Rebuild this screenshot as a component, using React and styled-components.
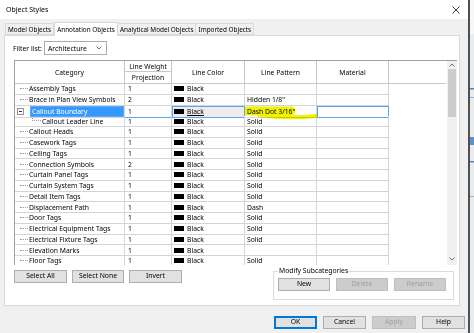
import React from 'react';
import styled, { createGlobalStyle } from 'styled-components';

const GlobalStyle = createGlobalStyle`
  html, body {
    margin: 0;
    padding: 0;
    background: #f0f0f0;
  }
  body {
    font-family: "Noto Sans", "DejaVu Sans", sans-serif;
    font-size: 6.8px;
    color: #000;
  }
  * {
    box-sizing: border-box;
  }
`;

const COLS = '110px 47px 73px 72px 72px 1fr';

const Screen = styled.div`
  display: flex;
  width: 474px;
  height: 333px;
  overflow: hidden;
`;

const Dialog = styled.div`
  display: flex;
  flex-direction: column;
  width: 469px;
  background: #f0f0f0;
`;

const TitleBar = styled.div`
  display: flex;
  align-items: center;
  justify-content: space-between;
  height: 19px;
  padding: 0 8px 0 6px;
  background: #fff;
  font-size: 7px;
`;

const Body = styled.div`
  display: flex;
  flex-direction: column;
  padding: 2px 8px 0 4px;
`;

const TabBar = styled.div`
  display: flex;
  align-items: flex-end;
  height: 14px;
  padding-left: 1px;
`;

const Tab = styled.div`
  display: flex;
  align-items: center;
  height: ${({ active }) => (active ? '14px' : '12px')};
  padding: 0 2px;
  margin-bottom: ${({ active }) => (active ? '-1px' : '0')};
  background: ${({ active }) => (active ? '#fff' : '#f0f0f0')};
  border: 1px solid #d9d9d9;
  border-bottom: ${({ active }) => (active ? 'none' : '1px solid #d9d9d9')};
  border-left: ${({ first, active }) => (first || active ? '1px solid #d9d9d9' : 'none')};
  position: relative;
  z-index: ${({ active }) => (active ? 1 : 0)};
  font-size: 6.4px;
  white-space: nowrap;
`;

const Panel = styled.div`
  display: flex;
  flex-direction: column;
  height: 271px;
  padding: 5px 2px 0 8px;
  background: #fff;
  border: 1px solid #d9d9d9;
`;

const FilterRow = styled.div`
  display: flex;
  align-items: center;
  gap: 2px;
  height: 14px;
`;

const Select = styled.div`
  display: flex;
  align-items: center;
  justify-content: space-between;
  width: 63px;
  height: 14px;
  padding: 0 4px 0 3px;
  border: 1px solid #adadad;
  background: #fff;
`;

const GridFrame = styled.div`
  display: flex;
  height: 205px;
  margin: 5px 0 0 1px;
  border-top: 1px solid #a0a0a0;
  border-left: 1px solid #a0a0a0;
  overflow: hidden;
`;

const GridBody = styled.div`
  flex: 1;
  overflow: hidden;
`;

const Header = styled.div`
  display: grid;
  grid-template-columns: ${COLS};
  grid-template-rows: 11px 12px;
  background: #fff;
`;

const HeadCell = styled.div`
  display: flex;
  align-items: center;
  justify-content: center;
  grid-column: ${({ col }) => col};
  grid-row: ${({ row }) => row};
  border-right: 1px solid ${({ last }) => (last ? 'transparent' : '#c8c8c8')};
  border-bottom: 1px solid #c8c8c8;
  white-space: nowrap;
`;

const Row = styled.div`
  display: grid;
  grid-template-columns: ${COLS};
  height: 10.75px;
`;

const Cell = styled.div`
  display: flex;
  align-items: center;
  position: relative;
  padding-left: ${({ pad }) => pad || 0}px;
  border-right: 1px solid #d4d4d4;
  border-bottom: 1px solid ${({ focus }) => (focus ? '#5da4e8' : '#d4d4d4')};
  white-space: nowrap;
`;

const FocusCell = styled(Cell)`
  background: ${({ shade }) => (shade ? '#ececec' : '#fff')};
  outline: 1px solid #5da4e8;
  outline-offset: -1px;
`;

const Filler = styled.div``;

const TreeLine = styled.span`
  display: inline-block;
  width: 8px;
  margin: 0 1px 0 5px;
  border-top: 1px dotted #9a9a9a;
`;

const TreeElbow = styled.span`
  display: inline-block;
  align-self: flex-start;
  width: 9px;
  height: 5px;
  margin: 0 1px 0 17px;
  border-left: 1px dotted #9a9a9a;
  border-bottom: 1px dotted #9a9a9a;
`;

const ExpandBox = styled.span`
  display: inline-flex;
  align-items: center;
  justify-content: center;
  width: 7px;
  height: 7px;
  margin: 0 6px 0 2px;
  border: 1px solid #919191;
  &::after {
    content: '';
    width: 3px;
    border-top: 1px solid #333;
  }
`;

const Highlight = styled.span`
  display: flex;
  align-items: center;
  align-self: stretch;
  flex: 1;
  padding-left: 1px;
  background: #3399ff;
  color: #fff;
  border: 1px solid #5aaaf5;
`;

const Swatch = styled.span`
  display: inline-block;
  width: 10px;
  height: 5px;
  margin: 0 3px 0 2px;
  background: #000;
`;

const Underlined = styled.span`
  text-decoration: underline;
`;

const Marker = styled.svg`
  position: absolute;
  left: 0;
  top: -6px;
  mix-blend-mode: multiply;
  pointer-events: none;
  z-index: 2;
`;

const Scrollbar = styled.div`
  display: flex;
  flex-direction: column;
  align-items: center;
  width: 10px;
  background: #f0f0f0;
`;

const ScrollArrow = styled.div`
  display: flex;
  align-items: center;
  justify-content: center;
  height: ${({ h }) => h}px;
`;

const Thumb = styled.div`
  width: 8px;
  height: 48px;
  background: #cdcdcd;
`;

const Track = styled.div`
  flex: 1;
`;

const BottomRow = styled.div`
  display: flex;
  align-items: flex-start;
  margin-top: 4px;
`;

const ButtonGroup = styled.div`
  display: flex;
  gap: ${({ gap }) => gap || 5}px;
  margin: ${({ m }) => m || 0};
`;

const Button = styled.button`
  width: ${({ w }) => w || 53}px;
  height: 13px;
  padding: 0;
  font-family: inherit;
  font-size: 6.8px;
  color: ${({ disabled }) => (disabled ? '#a0a0a0' : '#000')};
  background: ${({ disabled }) => (disabled ? '#cccccc' : '#e1e1e1')};
  border: 1px solid ${({ primary, disabled }) =>
    primary ? '#0078d7' : disabled ? '#bfbfbf' : '#adadad'};
  box-shadow: ${({ primary }) => (primary ? 'inset 0 0 0 1px #0078d7' : 'none')};
  line-height: 1;
`;

const GroupBox = styled.fieldset`
  width: 181px;
  height: 33px;
  margin: -2px 3px 0 auto;
  padding: 0 0 0 4px;
  border: 1px solid #dcdcdc;
`;

const GroupLegend = styled.legend`
  padding: 0 1px;
  margin-left: 0;
  font-size: 6.8px;
  line-height: 8px;
`;

const Footer = styled.div`
  display: flex;
  justify-content: flex-end;
  gap: 6px;
  padding: 10px 3px 0 0;
`;

const BackWindow = styled.div`
  flex: 1;
  border-left: 2px solid #505050;
  background: #e9ecef;
`;

const rows = [
  { name: 'Assembly Tags', w: '1', p: '' },
  { name: 'Brace in Plan View Symbols', w: '2', p: 'Hidden 1/8"' },
  { name: 'Callout Boundary', w: '1', p: 'Dash Dot 3/16"', selected: true },
  { name: 'Callout Leader Line', w: '1', p: 'Solid', child: true },
  { name: 'Callout Heads', w: '1', p: 'Solid' },
  { name: 'Casework Tags', w: '1', p: 'Solid' },
  { name: 'Ceiling Tags', w: '1', p: 'Solid' },
  { name: 'Connection Symbols', w: '2', p: 'Solid' },
  { name: 'Curtain Panel Tags', w: '1', p: 'Solid' },
  { name: 'Curtain System Tags', w: '1', p: 'Solid' },
  { name: 'Detail Item Tags', w: '1', p: 'Solid' },
  { name: 'Displacement Path', w: '1', p: 'Dash' },
  { name: 'Door Tags', w: '1', p: 'Solid' },
  { name: 'Electrical Equipment Tags', w: '1', p: 'Solid' },
  { name: 'Electrical Fixture Tags', w: '1', p: 'Solid' },
  { name: 'Elevation Marks', w: '1', p: '' },
  { name: 'Floor Tags', w: '1', p: 'Solid' },
];

const CloseIcon = () => (
  <svg width="8" height="8" viewBox="0 0 8 8">
    <path d="M0.5 0.5 L7.5 7.5 M7.5 0.5 L0.5 7.5" stroke="#222" strokeWidth="0.9" />
  </svg>
);

const Chevron = ({ up }) => (
  <svg width="6" height="4" viewBox="0 0 6 4">
    <path d={up ? 'M0.5 3.5 L3 1 L5.5 3.5' : 'M0.5 0.5 L3 3 L5.5 0.5'} stroke="#606060" strokeWidth="0.9" fill="none" />
  </svg>
);

// strip of the window lying behind the dialog
const BackMarks = () => (
  <svg width="4" height="333" viewBox="0 0 4 333">
    <rect x="0" y="0" width="4" height="34" fill="#f7f7f7" />
    <rect x="0" y="88" width="4" height="1.5" fill="#4d86c4" />
    <rect x="0" y="97" width="4" height="1" fill="#8fb3da" />
    <rect x="0" y="137" width="4" height="8" fill="#5b92cc" />
    <rect x="0" y="161" width="4" height="1.5" fill="#4d86c4" />
    <rect x="0" y="196" width="4" height="1" fill="#8fb3da" />
  </svg>
);

const CategoryCell = ({ row }) => {
  if (row.selected) {
    return (
      <Cell>
        <ExpandBox />
        <Highlight>{row.name}</Highlight>
      </Cell>
    );
  }
  return (
    <Cell>
      {row.child ? <TreeElbow /> : <TreeLine />}
      {row.name}
    </Cell>
  );
};

const GridRow = ({ row }) => (
  <Row>
    <CategoryCell row={row} />
    {row.selected ? (
      <>
        <Cell pad={3} focus>{row.w}</Cell>
        <FocusCell shade>
          <Swatch />
          <Underlined>Black</Underlined>
        </FocusCell>
        <Cell pad={2}>
          <Marker width="74" height="22" viewBox="0 0 74 22">
            <path d="M2 11 L46 11" stroke="#f2f200" strokeWidth="9" strokeLinecap="round" />
            <path d="M14 15 Q44 19 70 16" stroke="#f2f200" strokeWidth="4" strokeLinecap="round" fill="none" />
          </Marker>
          {row.p}
        </Cell>
        <FocusCell />
      </>
    ) : (
      <>
        <Cell pad={3}>{row.w}</Cell>
        <Cell>
          <Swatch />
          Black
        </Cell>
        <Cell pad={2}>{row.p}</Cell>
        <Cell />
      </>
    )}
    <Filler />
  </Row>
);

const App = () => (
  <>
    <GlobalStyle />
    <Screen>
      <Dialog>
        <TitleBar>
          <span>Object Styles</span>
          <CloseIcon />
        </TitleBar>
        <Body>
          <TabBar>
            <Tab first>Model Objects</Tab>
            <Tab active>Annotation Objects</Tab>
            <Tab>Analytical Model Objects</Tab>
            <Tab>Imported Objects</Tab>
          </TabBar>
          <Panel>
            <FilterRow>
              <span>Filter list:</span>
              <Select>
                <span>Architecture</span>
                <Chevron />
              </Select>
            </FilterRow>
            <GridFrame>
              <GridBody>
                <Header>
                  <HeadCell col="1" row="1 / 3">Category</HeadCell>
                  <HeadCell col="2" row="1">Line Weight</HeadCell>
                  <HeadCell col="2" row="2">Projection</HeadCell>
                  <HeadCell col="3" row="1 / 3">Line Color</HeadCell>
                  <HeadCell col="4" row="1 / 3">Line Pattern</HeadCell>
                  <HeadCell col="5" row="1 / 3">Material</HeadCell>
                  <HeadCell col="6" row="1 / 3" last />
                </Header>
                {rows.map((row) => (
                  <GridRow key={row.name} row={row} />
                ))}
              </GridBody>
              <Scrollbar>
                <ScrollArrow h={8}>
                  <Chevron up />
                </ScrollArrow>
                <Thumb />
                <Track />
                <ScrollArrow h={12}>
                  <Chevron />
                </ScrollArrow>
              </Scrollbar>
            </GridFrame>
            <BottomRow>
              <ButtonGroup m="1px 0 0 1px">
                <Button>Select All</Button>
                <Button w={52}>Select None</Button>
                <Button>Invert</Button>
              </ButtonGroup>
              <GroupBox>
                <GroupLegend>Modify Subcategories</GroupLegend>
                <ButtonGroup gap={6} m="3px 0 0 0">
                  <Button w={52}>New</Button>
                  <Button w={52} disabled>Delete</Button>
                  <Button w={52} disabled>Rename</Button>
                </ButtonGroup>
              </GroupBox>
            </BottomRow>
          </Panel>
        </Body>
        <Footer>
          <Button w={43} primary>OK</Button>
          <Button w={43}>Cancel</Button>
          <Button w={44} disabled>Apply</Button>
          <Button w={43}>Help</Button>
        </Footer>
      </Dialog>
      <BackWindow>
        <BackMarks />
      </BackWindow>
    </Screen>
  </>
);

export default App;
